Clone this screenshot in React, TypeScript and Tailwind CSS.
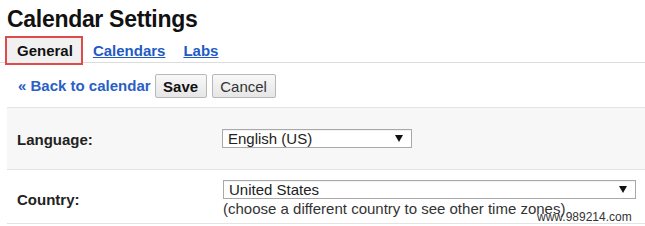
import React from 'react';

const Arrow: React.FC = () => (
  <svg width="8" height="7" viewBox="0 0 8 7" className="shrink-0">
    <polygon points="0,0 8,0 4,7" fill="#111" />
  </svg>
);

const FakeSelect: React.FC<{ value: string; width: string; height: string }> = ({ value, width, height }) => (
  <div
    className={`${width} ${height} flex items-center justify-between border border-[#a9a9a9] bg-white pl-[5px] pr-[8px] text-[15px] leading-none text-[#222] shadow-[inset_0_1px_1px_rgba(0,0,0,0.06)]`}
  >
    <span>{value}</span>
    <Arrow />
  </div>
);

export default function App() {
  return (
    <div
      className="relative h-[226px] w-full overflow-hidden bg-white text-[#222]"
      style={{ fontFamily: '"Liberation Sans", Arial, sans-serif' }}
    >
      {/* Title */}
      <h1 className="pl-[7px] pt-[5px] text-[23px] font-bold leading-[28px] tracking-[-0.3px] text-[#111]">
        Calendar Settings
      </h1>

      {/* Tabs */}
      <div className="mt-[3px] flex h-[27px] items-start border-b border-[#dcdcdc] pl-[5px]">
        <div className="-mb-[2px] h-[29px] border-2 border-[#dd4b4b] bg-[#f1f1f1] pl-[10px] pr-[8px] text-[15px] font-bold leading-[25px] text-[#111]">
          General
        </div>
        <a className="ml-[10px] mt-[2px] text-[15px] font-bold leading-[25px] text-[#1f5bc4] underline">
          Calendars
        </a>
        <a className="ml-[18px] mt-[2px] text-[15px] font-bold leading-[25px] text-[#1f5bc4] underline">
          Labs
        </a>
      </div>

      {/* Toolbar */}
      <div className="flex items-center pb-[9px] pl-[18px] pt-[11px]">
        <a className="text-[15px] font-bold leading-[24px] text-[#2a5fc6]">« Back to calendar</a>
        <button className="ml-[4px] h-[24px] w-[52px] rounded-[2px] border border-[#b8b8b8] bg-gradient-to-b from-[#f8f8f8] to-[#e6e6e6] text-[15px] font-bold leading-none text-[#111]">
          Save
        </button>
        <button className="ml-[5px] h-[24px] w-[64px] rounded-[2px] border border-[#b8b8b8] bg-gradient-to-b from-[#f8f8f8] to-[#e6e6e6] text-[15px] leading-none text-[#333]">
          Cancel
        </button>
      </div>

      {/* Language */}
      <div className="ml-[7px] flex h-[62px] items-center border-t border-[#e3e3e3] bg-[#f7f7f7] pl-[10px]">
        <div className="w-[205px] pt-[2px] text-[15px] font-bold leading-[17px] text-[#222]">Language:</div>
        <FakeSelect value="English (US)" width="w-[190px]" height="h-[19px]" />
      </div>

      {/* Country */}
      <div className="ml-[7px] flex h-[55px] items-start border-y border-[#e3e3e3] pl-[10px] pt-[10px]">
        <div className="w-[206px] pt-[11px] text-[15px] font-bold leading-[17px] text-[#222]">Country:</div>
        <div className="flex flex-col">
          <FakeSelect value="United States" width="w-[413px]" height="h-[19px]" />
          <div className="mt-[1px] whitespace-nowrap text-[15px] leading-[17px] text-[#333]">
            (choose a different country to see other time zones)
          </div>
        </div>
      </div>

      {/* Watermark */}
      <div className="absolute left-[537px] top-[210px] text-[12px] leading-[14px] text-[#333]">www.989214.com</div>
    </div>
  );
}
